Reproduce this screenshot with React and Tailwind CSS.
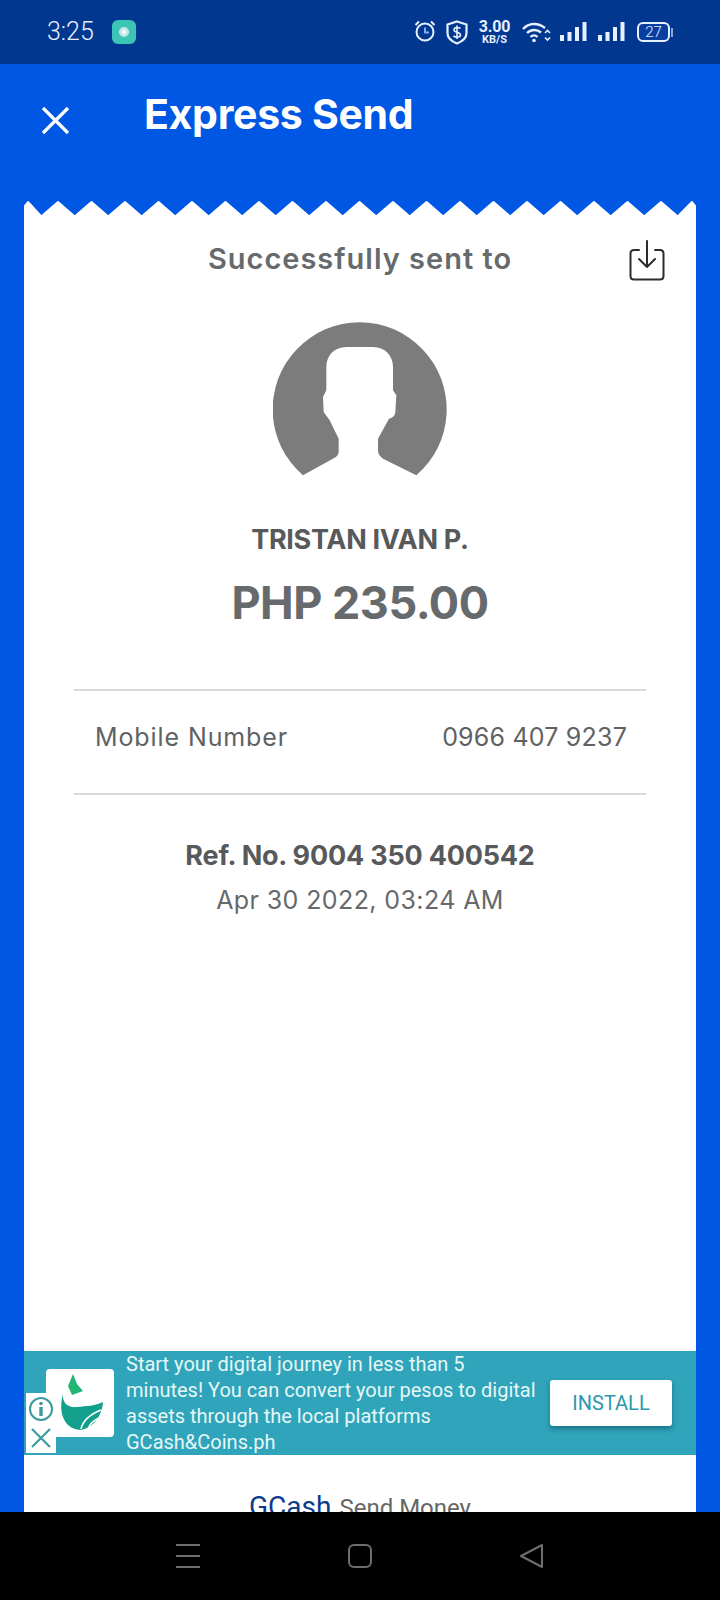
const zigzag = () => {
    // teeth of the receipt edge, one peak every 33.5px
    let d = 'M0 18 L0 7 L4 2 L17.3 16.5'
    for (let i = 0; i < 19; i++) {
        const x = 34 + i * 33.5
        d += ` L${x} 2 L${x + 16.7} 16.5`
    }
    return d + ' L668 2 L672 7 L672 18 Z'
}

const Signal = () => (
    <svg width="27" height="20" viewBox="0 0 27 20" fill="#e6f0ff">
        <rect x="0" y="13" width="4" height="6" />
        <rect x="7.5" y="10" width="4" height="9" />
        <rect x="15" y="5" width="4" height="14" />
        <rect x="22.5" y="0" width="4" height="19" />
    </svg>
)

const StatusBar = () => (
    <div className="h-16 shrink-0 bg-[#02378f] flex items-center pl-[47px] text-[#e6f0ff]">
        <span className="text-[25px] font-light w-[65px] font-['Roboto',sans-serif]">3:25</span>
        <div className="w-6 h-6 rounded-[6px] bg-[#3cc4b4] flex items-center justify-center">
            <div className="w-[10px] h-[10px] rounded-full bg-white border-[3px] border-[#c4e8e6]" />
        </div>
        <div className="ml-[278px] w-[21px] h-[24px]">
            <svg width="22" height="22" viewBox="0 0 22 22" fill="none" stroke="#e6f0ff">
                <circle cx="11" cy="12" r="8.5" strokeWidth="2" />
                <path d="M11 7.5 V12.5 H15" strokeWidth="2" stroke="#7fb0ff" />
                <path d="M1.5 5 L5 1.5 M20.5 5 L17 1.5" strokeWidth="2" />
            </svg>
        </div>
        <div className="ml-[11px] w-[22px]">
            <svg width="22" height="25" viewBox="0 0 22 25" fill="none" stroke="#e6f0ff">
                <path d="M11 1.5 L20.5 4.5 V13 C20.5 18 16 21.5 11 23.5 C6 21.5 1.5 18 1.5 13 V4.5 Z" strokeWidth="2.2" />
                <path d="M14.5 8.5 C13 7 8 7 8 10 C8 13 14.5 11.5 14.5 15 C14.5 17.5 9.5 17.5 7.5 16 M11 5.5 V19" strokeWidth="1.6" />
            </svg>
        </div>
        <div className="ml-[10px] w-[33px] flex flex-col items-center font-['Roboto',sans-serif] font-bold">
            <span className="text-[16px] leading-[14px] tracking-[-0.2px]">3.00</span>
            <span className="text-[11px] leading-[11px]">KB/S</span>
        </div>
        <div className="ml-[11px] w-[29px]">
            <svg width="29" height="21" viewBox="0 0 29 21" fill="none" stroke="#e6f0ff" strokeWidth="2.4">
                <path d="M1 7 C7 0.5 16 0.5 23 6" />
                <path d="M5 11 C9 7 15 7 19 10.5" />
                <path d="M8.5 15 C10.5 13 13.5 13 15.5 15" />
                <circle cx="12" cy="18.5" r="1.8" fill="#e6f0ff" stroke="none" />
                <path d="M23 11 L25.5 8.5 L28 11 M23 15.5 L25.5 18 L28 15.5" strokeWidth="1.6" />
            </svg>
        </div>
        <div className="ml-[9px]"><Signal /></div>
        <div className="ml-[11px]"><Signal /></div>
        <div className="ml-3 flex items-center">
            <div className="w-[33px] h-[20px] rounded-[6px] border-2 border-[#e6f0ff] bg-[#0a3fa0] flex items-center justify-center text-[15px] font-light leading-none font-['Roboto',sans-serif]">27</div>
            <div className="w-[2px] h-[9px] ml-[1px] bg-[#8aa6d6]" />
        </div>
    </div>
)

const Avatar = () => (
    <svg className="w-[174px] h-[154px]" viewBox="130 305 522 462">
        <path
            fill="#7c7c7c"
            d="M220 765 A261 261 0 1 1 560 765 L460 715 Q445 705 445 690 L445 655 L478 595 Q495 592 497 575 L500 525 L490 510 L490 440 C490 405 465 380 430 380 L350 380 C315 380 290 405 290 440 L290 510 L280 530 L282 575 L300 600 L327 655 L327 695 Q327 705 315 712 Z"
        />
    </svg>
)

const SaveIcon = () => (
    <svg width="36" height="41" viewBox="0 0 36 41" fill="none" stroke="#2a2c2e" strokeWidth="2" strokeLinecap="round" strokeLinejoin="round">
        <path d="M10 10 H5 Q1.5 10 1.5 13.5 V36 Q1.5 39.5 5 39.5 H31 Q34.5 39.5 34.5 36 V13.5 Q34.5 10 31 10 H26" />
        <path d="M18 1 V27 M10 19 L18 27 L26 19" />
    </svg>
)

const AdLogo = () => (
    <svg width="46" height="58" viewBox="0 0 46 58">
        <path fill="#22b573" d="M16 0 L20 10 L26 17 L15 21 L11 12 Z" />
        <path fill="#12a08c" d="M6 20 C5 30 12 34 20 33 C30 32 38 32 46 28 C45 42 36 54 24 56 C10 56 0 42 6 20 Z" />
        <path fill="none" stroke="#fff" strokeWidth="1.6" d="M24 55 C26 46 34 40 44 36 M31 55 C33 50 37 46 42 44" />
    </svg>
)

const Ad = () => (
    <div className="relative h-[104px] shrink-0 bg-[#2fa4ba] flex items-center pl-[22px] overflow-hidden">
        <div className="w-[68px] h-[68px] rounded-[4px] bg-white shrink-0 flex items-center justify-center">
            <AdLogo />
        </div>
        <p className="ml-3 w-[420px] whitespace-nowrap text-[20px] leading-[26px] text-[#e6f7f7] font-['Roboto',sans-serif]">
            Start your digital journey in less than 5<br />
            minutes! You can convert your pesos to digital<br />
            assets through the local platforms<br />
            GCash&amp;Coins.ph
        </p>
        <div className="ml-[4px] w-[122px] h-[46px] rounded-[3px] bg-white shadow-[0_3px_5px_rgba(0,60,80,0.45)] flex items-center justify-center text-[20px] text-[#2c97ad] font-['Roboto',sans-serif]">
            INSTALL
        </div>
        {/* ad choices badge */}
        <div className="absolute left-[2px] top-[42px] w-[30px] h-[60px] bg-white flex flex-col items-center justify-between py-[3px]">
            <svg width="26" height="26" viewBox="0 0 26 26" fill="none" stroke="#3a9a9e" strokeWidth="2">
                <circle cx="13" cy="13" r="11" />
                <circle cx="13" cy="7.5" r="1.8" fill="#3a9a9e" stroke="none" />
                <path d="M13 11 V20" strokeWidth="3.4" />
            </svg>
            <svg width="24" height="24" viewBox="0 0 24 24" fill="none" stroke="#3a9a9e" strokeWidth="2.2">
                <path d="M3 3 L21 21 M21 3 L3 21" />
            </svg>
        </div>
    </div>
)

const App = () => {
    return (
        <div className="w-[720px] h-[1600px] flex flex-col overflow-hidden bg-black">
            <StatusBar />
            <div className="flex-1 min-h-0 bg-[#0057e4] overflow-hidden">
                <div className="h-[136px] flex items-start pt-[26px]">
                    <svg className="ml-[41px] mt-[16px]" width="29" height="29" viewBox="0 0 29 29" fill="none" stroke="#fff" strokeWidth="3.2">
                        <path d="M2 2 L27 27 M27 2 L2 27" />
                    </svg>
                    <h1 className="ml-[74px] text-[41px] leading-[48px] font-bold text-white font-['Inter',sans-serif] tracking-[-0.3px]">Express Send</h1>
                </div>
                <div className="mx-6 h-[1420px] flex flex-col">
                    <svg className="block shrink-0" width="672" height="18" viewBox="0 0 672 18">
                        <path d={zigzag()} fill="#fff" stroke="#fff" strokeWidth="2" strokeLinejoin="round" />
                    </svg>
                    <div className="flex-1 bg-white flex flex-col items-center">
                        <div className="w-full mt-[18px] h-[46px] grid grid-cols-[1fr_auto_1fr] items-center">
                            <div />
                            <h2 className="text-[29px] leading-[46px] font-semibold text-[#666a6c] tracking-[1px] font-['Inter',sans-serif]">Successfully sent to</h2>
                            <div className="justify-self-end mr-[31px] mt-[2px]">
                                <SaveIcon />
                            </div>
                        </div>
                        <div className="mt-[40px]"><Avatar /></div>
                        <p className="mt-[46px] text-[27px] leading-[36px] font-bold text-[#58595b] font-['Inter',sans-serif] tracking-[-0.3px]">TRISTAN IVAN P.</p>
                        <p className="mt-[15px] text-[45px] leading-[60px] font-bold text-[#676a6c] font-['Inter',sans-serif] tracking-[-0.5px]">PHP 235.00</p>
                        <div className="mt-[56px] w-[572px] h-[106px] pb-[8px] border-y-2 border-[#d9d9d9] flex items-center justify-between pl-[21px] pr-[19px] text-[25px] text-[#5f6264] font-['Inter',sans-serif] tracking-[0.9px]">
                            <span>Mobile Number</span>
                            <span className="tracking-[0.2px]">0966 407 9237</span>
                        </div>
                        <p className="mt-[41px] text-[27px] leading-[40px] font-bold text-[#58595b] font-['Inter',sans-serif] tracking-[-0.2px]">Ref. No. 9004 350 400542</p>
                        <p className="mt-[4px] text-[25px] leading-[40px] text-[#66696b] font-['Inter',sans-serif] tracking-[0.4px]">Apr 30 2022, 03:24 AM</p>
                        <div className="flex-1" />
                        <div className="w-full"><Ad /></div>
                        <p className="mt-[34px] h-[131px] leading-[36px] font-['Roboto',sans-serif] text-[#666]">
                            <span className="text-[28px] text-[#0b3a8a]">GCash</span>
                            <span className="ml-2 text-[24px]">Send Money</span>
                        </p>
                    </div>
                </div>
            </div>
            <div className="h-[88px] shrink-0 bg-black relative flex">
                <div className="w-full flex items-start pt-[32px] pl-[176px]">
                    <svg width="24" height="24" viewBox="0 0 24 24" stroke="#6e6e6e" strokeWidth="2">
                        <path d="M0 1 H24 M0 12 H24 M0 23 H24" />
                    </svg>
                    <svg className="ml-[148px]" width="24" height="24" viewBox="0 0 24 24" fill="none" stroke="#6e6e6e" strokeWidth="2">
                        <rect x="1" y="1" width="22" height="22" rx="5" />
                    </svg>
                    <svg className="ml-[148px]" width="24" height="24" viewBox="0 0 24 24" fill="none" stroke="#6e6e6e" strokeWidth="2" strokeLinejoin="round">
                        <path d="M22 1 V23 L1 12 Z" />
                    </svg>
                </div>
            </div>
        </div>
    )
}

export default App
